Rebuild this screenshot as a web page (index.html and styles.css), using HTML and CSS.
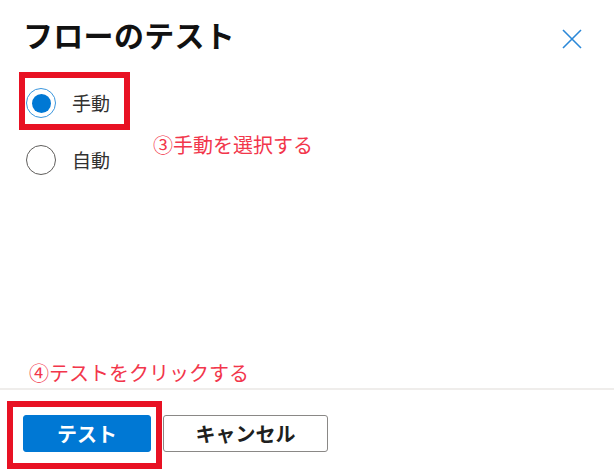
FILE: index.html
```html
<!DOCTYPE html>
<html lang="ja">
<head>
<meta charset="utf-8">
<title>フローのテスト</title>
<link rel="stylesheet" href="styles.css">
</head>
<body>
<div class="dialog">
  <div class="header">
    <h1 class="title">フローのテスト</h1>
    <button class="close" aria-label="閉じる">
      <svg width="20" height="20" viewBox="0 0 20 20"><path d="M1 1 L19 19 M19 1 L1 19" stroke="#2b88d8" stroke-width="1.6" fill="none"/></svg>
    </button>
  </div>
  <div class="options">
    <label class="option">
      <span class="radio checked"><span class="dot"></span></span>
      <span class="label">手動</span>
    </label>
    <label class="option">
      <span class="radio"></span>
      <span class="label">自動</span>
    </label>
    <div class="mark mark-radio"></div>
    <div class="note note-select">③手動を選択する</div>
  </div>
  <div class="note-row"><span class="note">④テストをクリックする</span></div>
  <div class="footer">
    <button class="btn primary">テスト</button>
    <button class="btn secondary">キャンセル</button>
    <div class="mark mark-btn"></div>
  </div>
</div>
</body>
</html>
```
FILE: styles.css
```css
* { box-sizing: border-box; }
html, body { margin: 0; padding: 0; background: #fff; }
body {
  font-family: "Noto Sans CJK JP", "Noto Sans", sans-serif;
  color: #323130;
}
.dialog {
  width: 614px;
  height: 473px;
  display: flex;
  flex-direction: column;
  overflow: hidden;
}
.header {
  display: flex;
  justify-content: space-between;
  align-items: flex-start;
  padding: 16px 32px 0 23px;
}
.title {
  margin: 0;
  font-size: 30px;
  line-height: 36px;
  font-weight: 700;
  color: #111;
  letter-spacing: 0.3px;
}
.close {
  margin-top: 13px;
  padding: 0;
  border: 0;
  background: none;
  width: 20px;
  height: 20px;
}
.close svg { display: block; }
.options {
  position: relative;
  flex: 1;
  padding: 36px 0 0 26px;
  display: flex;
  flex-direction: column;
  gap: 27px;
}
.option {
  display: flex;
  align-items: center;
  gap: 16px;
  height: 30px;
}
.radio {
  width: 30px;
  height: 30px;
  border-radius: 50%;
  border: 1.5px solid #605e5c;
  display: flex;
  align-items: center;
  justify-content: center;
}
.radio.checked { border-color: #3a96dd; }
.dot {
  width: 19px;
  height: 19px;
  border-radius: 50%;
  background: #0078d4;
}
.label {
  font-size: 19px;
  line-height: 24px;
  color: #323130;
}
.mark {
  position: absolute;
  border: 6px solid #e81123;
}
.mark-radio {
  left: 19px;
  top: 20px;
  width: 111px;
  height: 58px;
}
.note {
  font-size: 20px;
  line-height: 24px;
  color: #f2364b;
}
.note-select {
  position: absolute;
  left: 153px;
  top: 81px;
}
.note-row {
  padding: 0 0 2px 29px;
}
.footer {
  position: relative;
  border-top: 2px solid #efedeb;
  padding: 25px 0 21px 23px;
  display: flex;
  gap: 12px;
}
.btn {
  height: 37px;
  border-radius: 3px;
  font-family: "Noto Sans CJK JP", "Noto Sans", sans-serif;
  font-size: 20px;
  font-weight: 700;
  padding: 0;
  line-height: 1;
}
.primary {
  width: 128px;
  background: #0078d4;
  border: 1px solid #0078d4;
  color: #fff;
}
.secondary {
  width: 165px;
  background: #fff;
  border: 1px solid #8a8886;
  color: #201f1e;
}
.mark-btn {
  left: 7px;
  top: 11px;
  width: 155px;
  height: 68px;
}
```
